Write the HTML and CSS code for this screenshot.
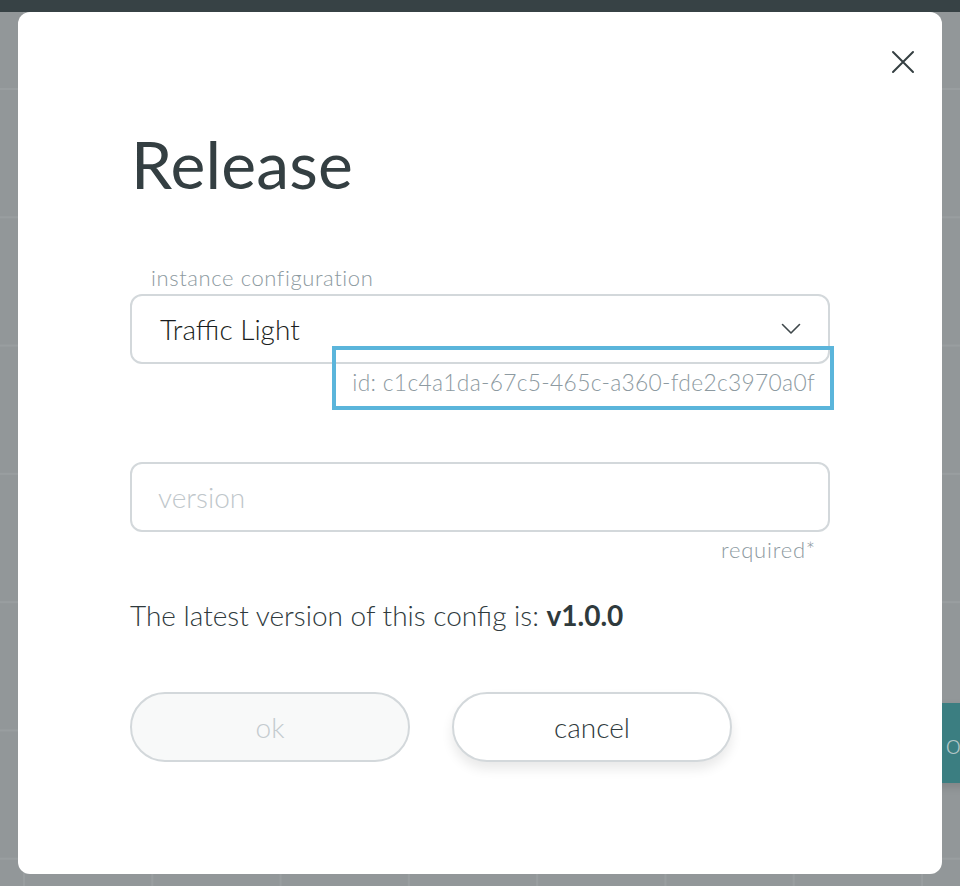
FILE: index.html
```html
<!DOCTYPE html>
<html lang="en">
<head>
<meta charset="utf-8">
<title>Release</title>
<link rel="stylesheet" href="styles.css">
</head>
<body>
<div class="app">
  <div class="app-header"></div>
  <div class="app-body">
    <div class="bg-action">ok</div>
  </div>
</div>

<div class="modal" role="dialog" aria-labelledby="modal-title">
  <button class="modal-close" aria-label="close">
    <svg width="24" height="24" viewBox="0 0 24 24" aria-hidden="true">
      <path d="M2 2 L22 22 M22 2 L2 22" stroke="#353f42" stroke-width="2" fill="none" stroke-linecap="round"/>
    </svg>
  </button>

  <h1 class="modal-title" id="modal-title">Release</h1>

  <div class="field">
    <label class="field-label">instance configuration</label>
    <div class="select">
      <span class="select-value">Traffic Light</span>
      <svg class="select-chevron" width="20" height="12" viewBox="0 0 20 12" aria-hidden="true">
        <path d="M1.5 1.5 L10 10 L18.5 1.5" stroke="#3f484b" stroke-width="1.6" fill="none" stroke-linecap="round" stroke-linejoin="round"/>
      </svg>
    </div>
    <div class="field-hint">
      <span class="id-text">id: c1c4a1da-67c5-465c-a360-fde2c3970a0f<span class="highlight"></span></span>
    </div>
  </div>

  <div class="field field-version">
    <div class="input"><span class="placeholder">version</span></div>
    <div class="field-hint required">required*</div>
  </div>

  <p class="latest">The latest version of this config is: <strong>v1.0.0</strong></p>

  <div class="actions">
    <button class="btn btn-disabled">ok</button>
    <button class="btn btn-cancel">cancel</button>
  </div>
</div>
</body>
</html>
```

FILE: styles.css
```css
html, body {
  margin: 0;
  padding: 0;
}

body {
  width: 960px;
  height: 886px;
  overflow: hidden;
  font-family: Lato, "Open Sans", sans-serif;
  background: #929799;
  position: relative;
}

.app {
  display: flex;
  flex-direction: column;
  height: 886px;
}

.app-header {
  height: 12px;
  background: #374245;
  flex: none;
}

.app-body {
  flex: 1;
  position: relative;
  background-color: #929799;
  background-image:
    linear-gradient(to right, #999ea0 0, #999ea0 2px, transparent 2px),
    linear-gradient(to bottom, #999ea0 0, #999ea0 2px, transparent 2px);
  background-size: 128.3px 128.3px, 128.3px 128.3px;
  background-position: 23px 0, 0 76px;
}

.bg-action {
  position: absolute;
  left: 880px;
  top: 691px;
  width: 160px;
  height: 80px;
  background: #3b7e81;
  color: #b3c6c7;
  font-size: 28px;
  font-weight: 300;
  display: flex;
  align-items: center;
  justify-content: center;
  box-shadow: 0 4px 8px rgba(0, 0, 0, 0.12);
}

.modal {
  position: absolute;
  left: 18px;
  top: 12px;
  width: 924px;
  height: 862px;
  box-sizing: border-box;
  background: #ffffff;
  border-radius: 12px;
  padding: 112px 112px 0 112px;
  display: flex;
  flex-direction: column;
}

.modal-close {
  position: absolute;
  left: 873px;
  top: 38px;
  width: 24px;
  height: 24px;
  padding: 0;
  border: 0;
  background: transparent;
  display: flex;
}

.modal-title {
  margin: 0 0 0 1px;
  font-size: 66px;
  line-height: 80px;
  font-weight: 400;
  color: #343f42;
  letter-spacing: 0.2px;
}

.field {
  display: flex;
  flex-direction: column;
}

.field-label {
  margin: 62px 0 0 21px;
  font-size: 22px;
  font-weight: 300;
  line-height: 24px;
  letter-spacing: 0.6px;
  color: #8d9aa1;
}

.select,
.input {
  margin-top: 4px;
  height: 70px;
  box-sizing: border-box;
  border: 2px solid #d3d8db;
  border-radius: 12px;
  padding: 0 28px;
  display: flex;
  align-items: center;
  justify-content: space-between;
}

.select-value {
  font-size: 28px;
  font-weight: 300;
  line-height: 32px;
  color: #1a1e20;
}

.select-chevron {
  margin-right: -1px;
}

.field-hint {
  margin-top: 6px;
  display: flex;
  justify-content: flex-end;
  padding-right: 15px;
  font-size: 22.8px;
  font-weight: 300;
  line-height: 24px;
  letter-spacing: 0.3px;
  color: #8d9aa1;
}

.id-text {
  position: relative;
}

.highlight {
  position: absolute;
  left: -20px;
  right: -19px;
  top: -24px;
  bottom: -16px;
  border: 4px solid #5bb5db;
}

.field-version {
  margin-top: 68px;
}

.field-version .input {
  margin-top: 0;
}

.placeholder {
  font-size: 28px;
  font-weight: 300;
  line-height: 32px;
  color: #bfc7cb;
  margin-left: -2px;
}

.required {
  padding-right: 14px;
  font-size: 22px;
  letter-spacing: 0.8px;
}

.latest {
  margin: 37px 0 0 0;
  font-size: 28px;
  font-weight: 300;
  line-height: 32px;
  color: #2f3a3d;
}

.latest strong {
  font-weight: 700;
}

.actions {
  margin-top: 61px;
  display: flex;
  gap: 42px;
}

.btn {
  width: 280px;
  height: 70px;
  box-sizing: border-box;
  border-radius: 35px;
  border: 2px solid #d3d8db;
  font-family: Lato, "Open Sans", sans-serif;
  font-size: 28px;
  font-weight: 300;
  padding: 0;
}

.btn-disabled {
  background: #f8f9f9;
  color: #c4cbcf;
}

.btn-cancel {
  background: #ffffff;
  color: #2f3a3d;
  box-shadow: 0 7px 12px rgba(0, 0, 0, 0.09);
}
```
